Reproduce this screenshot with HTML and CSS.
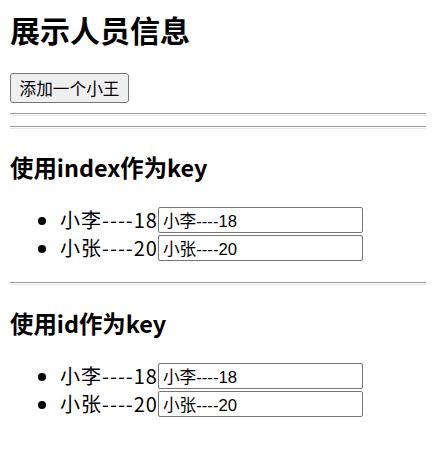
FILE: index.html
```html
<!DOCTYPE html>
<html lang="zh-CN">
<head>
<meta charset="utf-8">
<title>展示人员信息</title>
<link rel="stylesheet" href="styles.css">
</head>
<body>
<div class="app">
  <h2 class="title">展示人员信息</h2>
  <button class="add-btn" type="button">添加一个小王</button>
  <hr class="rule">
  <hr class="rule">
  <h3 class="section-title">使用index作为key</h3>
  <ul class="person-list">
    <li class="person"><span class="person-label">小李----18</span><input class="person-input" type="text" value="小李----18"></li>
    <li class="person"><span class="person-label">小张----20</span><input class="person-input" type="text" value="小张----20"></li>
  </ul>
  <hr class="rule">
  <h3 class="section-title">使用id作为key</h3>
  <ul class="person-list">
    <li class="person"><span class="person-label">小李----18</span><input class="person-input" type="text" value="小李----18"></li>
    <li class="person"><span class="person-label">小张----20</span><input class="person-input" type="text" value="小张----20"></li>
  </ul>
</div>
</body>
</html>
```

FILE: styles.css
```css
html, body {
  background: #ffffff;
}

body {
  margin: 10px;
  color: #000000;
  font-family: "Noto Sans CJK SC", sans-serif;
  font-size: 20px;
}

.title {
  margin: 0 0 24px;
  font-size: 30px;
  line-height: 39px;
  font-weight: 700;
}

.add-btn {
  display: block;
  box-sizing: border-box;
  width: 119px;
  height: 30px;
  padding: 0 8px;
  border: 1px solid #767676;
  border-radius: 3px;
  background: #efefef;
  color: #000000;
  font-family: "Noto Sans CJK SC", sans-serif;
  font-size: 16.67px;
  line-height: 28px;
}

.rule {
  height: 1px;
  margin: 10px -10px 10px 0;
  border: 0;
  border-top: 1px solid #9a9a9a;
  border-bottom: 1px solid #e6e6e6;
}

.section-title {
  margin: 23px 0;
  font-size: 23.4px;
  line-height: 31px;
  font-weight: 700;
}

.person-list {
  margin: 23px 0 20px;
  padding-left: 50px;
}

.person {
  height: 28px;
  line-height: 28px;
}

.person-label {
  vertical-align: top;
  letter-spacing: 1px;
}

.person-input {
  box-sizing: border-box;
  width: 205px;
  height: 26px;
  margin: 1px 0 0;
  padding: 0 4px;
  border: 1px solid #767676;
  border-radius: 2px;
  vertical-align: top;
  font-family: "Liberation Sans", "Noto Sans CJK SC", sans-serif;
  font-size: 16.67px;
  color: #000000;
}
```
